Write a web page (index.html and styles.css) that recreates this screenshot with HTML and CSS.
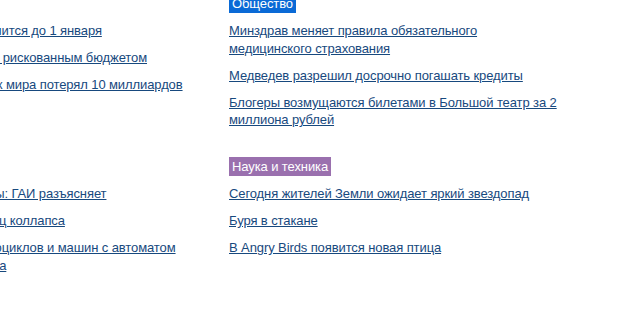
FILE: index.html
```html
<!DOCTYPE html>
<html lang="ru">
<head>
<meta charset="utf-8">
<title>Новости</title>
<link rel="stylesheet" href="styles.css">
</head>
<body>
<div class="page">
  <section class="rubric rubric-left">
    <h3 class="tag tag-economy">Экономика</h3>
    <ul class="news">
      <li class="i1"><a href="#">Программа продлится до 1 января</a></li>
      <li class="i2"><a href="#">Страна останется с рискованным бюджетом</a></li>
      <li class="i3"><a href="#">Богатейший человек мира потерял 10 миллиардов</a></li>
    </ul>
  </section>
  <section class="rubric">
    <h3 class="tag tag-society">Общество</h3>
    <ul class="news">
      <li><a href="#">Минздрав меняет правила обязательного медицинского страхования</a></li>
      <li><a href="#">Медведев разрешил досрочно погашать кредиты</a></li>
      <li><a href="#">Блогеры возмущаются билетами в Большой театр за 2 миллиона рублей</a></li>
    </ul>
  </section>
  <section class="rubric rubric-left">
    <h3 class="tag tag-auto">Авто</h3>
    <ul class="news">
      <li class="i4"><a href="#">Новые штрафы: ГАИ разъясняет</a></li>
      <li class="i5"><a href="#">Москву ждет месяц коллапса</a></li>
      <li class="i6"><a href="#">Права для мотоциклов и машин с автоматом введут с 2013 года</a></li>
    </ul>
  </section>
  <section class="rubric">
    <h3 class="tag tag-science">Наука и техника</h3>
    <ul class="news">
      <li><a href="#">Сегодня жителей Земли ожидает яркий звездопад</a></li>
      <li><a href="#">Буря в стакане</a></li>
      <li><a href="#">В Angry Birds появится новая птица</a></li>
    </ul>
  </section>
</div>
</body>
</html>
```
FILE: styles.css
```css
html, body {
  margin: 0;
  padding: 0;
  background: #ffffff;
  overflow: hidden;
}
body {
  font-family: "Liberation Sans", Arial, sans-serif;
  font-size: 13px;
  letter-spacing: -0.1px;
}
.page {
  display: grid;
  grid-template-columns: 305px 330px;
  column-gap: 29px;
  row-gap: 28px;
  margin-left: -105px;
  margin-top: -6px;
  width: 664px;
}
.rubric {
  display: flex;
  flex-direction: column;
  align-items: flex-start;
}
.tag {
  margin: 0 0 9px 0;
  padding: 0 3px;
  font-size: 13px;
  font-weight: normal;
  line-height: 19px;
  color: #ffffff;
}
.tag-society { background: #0a6ad6; }
.tag-science { background: #9a70ae; }
.tag-economy { background: #2f8c3a; }
.tag-auto { background: #d9822b; }
.news {
  list-style: none;
  margin: 0;
  padding: 0;
  display: flex;
  flex-direction: column;
  gap: 9.3px;
}
.news li {
  line-height: 17.7px;
}
.news a {
  color: #17497e;
  text-decoration: underline;
}
.i1 { text-indent: 0; }
.i2 { text-indent: -12px; }
.i3 { text-indent: -15px; }
.i4 { text-indent: 16px; }
.i5 { text-indent: -4px; }
.i6 { text-indent: 12px; }
```
